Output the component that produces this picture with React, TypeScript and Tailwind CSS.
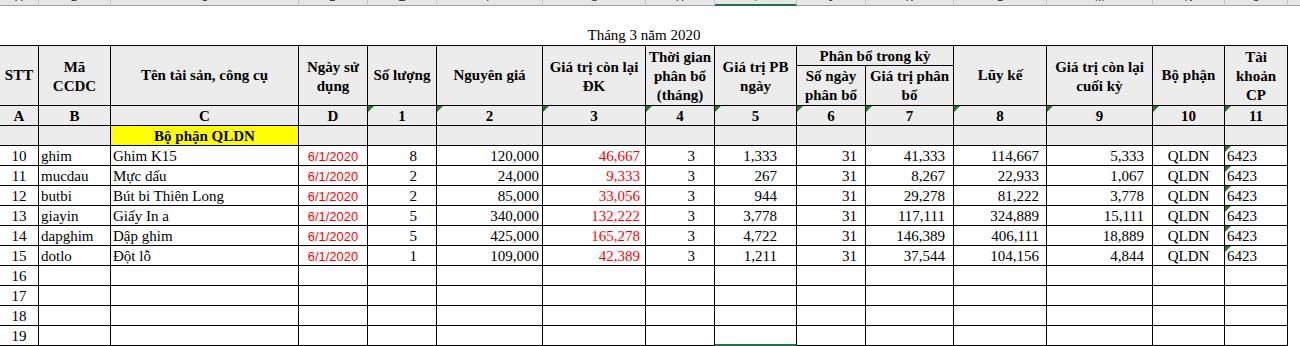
import React from "react";

const widths = ["w-[39px]","w-[72px]","w-[188px]","w-[69px]","w-[69px]","w-[106px]","w-[103px]","w-[69px]","w-[82px]","w-[69px]","w-[88px]","w-[93px]","w-[106px]","w-[72px]","w-[63px]"];
const letters = ["A","B","C","D","E","F","G","H","I","J","K","L","M","N","O"];

const Tri = () => (
  <span className="absolute left-0 top-0 w-0 h-0 border-t-[6px] border-r-[6px] border-t-[#1e7b1e] border-r-transparent" />
);

const base = "relative border-r border-b border-black";
const hdr = `${base} bg-[#ececec] font-bold flex items-center justify-center text-center leading-[19px]`;

type Row = [string, string, string, string, string, string, string, string, string, string, string, string, string];
const rows: Row[] = [
  ["ghim","Ghim K15","8","120,000","46,667","3","1,333","31","41,333","114,667","5,333","QLDN","6423"],
  ["mucdau","Mực dấu","2","24,000","9,333","3","267","31","8,267","22,933","1,067","QLDN","6423"],
  ["butbi","Bút bi Thiên Long","2","85,000","33,056","3","944","31","29,278","81,222","3,778","QLDN","6423"],
  ["giayin","Giấy In a","5","340,000","132,222","3","3,778","31","117,111","324,889","15,111","QLDN","6423"],
  ["dapghim","Dập ghim","5","425,000","165,278","3","4,722","31","146,389","406,111","18,889","QLDN","6423"],
  ["dotlo","Đột lỗ","1","109,000","42,389","3","1,211","31","37,544","104,156","4,844","QLDN","6423"],
];

const dcell = `${base} bg-white flex items-end leading-[17px] whitespace-nowrap overflow-hidden`;

export default function App() {
  return (
    <div className="w-[1300px] h-[346px] bg-white overflow-hidden text-black font-['Liberation_Serif','Times_New_Roman',serif] text-[15px]">
      {/* Excel column header strip */}
      <div className="flex h-[6px]">
        {widths.map((w, i) => (
          <div
            key={i}
            className={`${w} h-[6px] shrink-0 overflow-hidden flex justify-center bg-[#e6e6e6] border-r border-r-[#c4c4c4] ${i === 8 ? "border-b-2 border-b-[#217346]" : "border-b border-b-[#a0a0a0]"}`}
          >
            <span className={`-mt-[8px] text-[11px] leading-[11px] font-['Liberation_Sans',Arial,sans-serif] ${i === 8 ? "text-[#217346]" : "text-[#262626]"}`}>{letters[i]}</span>
          </div>
        ))}
        <div className="flex-1 h-[6px] bg-[#e6e6e6] border-b border-b-[#a0a0a0]" />
      </div>

      {/* Title */}
      <div className="w-[1288px] h-[39px] flex items-end justify-center pb-[1px] leading-[17px]">
        Tháng 3 năm 2020
      </div>

      {/* Table */}
      <div className="w-[1288px] border-t border-black grid grid-cols-[39px_72px_188px_69px_69px_106px_103px_69px_82px_69px_88px_93px_106px_72px_63px] grid-rows-[20px_40px_repeat(12,20px)]">
        <div className={`${hdr} row-span-2`}>STT</div>
        <div className={`${hdr} row-span-2 pt-[2px]`}>Mã<br />CCDC</div>
        <div className={`${hdr} row-span-2`}>Tên tài sản, công cụ</div>
        <div className={`${hdr} row-span-2 pt-[2px]`}>Ngày sử<br />dụng</div>
        <div className={`${hdr} row-span-2`}>Số lượng</div>
        <div className={`${hdr} row-span-2`}>Nguyên giá</div>
        <div className={`${hdr} row-span-2 pt-[2px]`}>Giá trị còn lại<br />ĐK</div>
        <div className={`${hdr} row-span-2 pt-[2px]`}>Thời gian<br />phân bổ<br />(tháng)</div>
        <div className={`${hdr} row-span-2 pt-[2px]`}>Giá trị PB<br />ngày</div>
        <div className={`${hdr} col-span-2 pt-[1px]`}>Phân bổ trong kỳ</div>
        <div className={`${hdr} row-span-2`}>Lũy kế</div>
        <div className={`${hdr} row-span-2 pt-[2px]`}>Giá trị còn lại<br />cuối kỳ</div>
        <div className={`${hdr} row-span-2`}>Bộ phận</div>
        <div className={`${hdr} row-span-2 pt-[2px]`}>Tài<br />khoản<br />CP</div>
        <div className={hdr}>Số ngày<br />phân bổ</div>
        <div className={hdr}>Giá trị phân<br />bổ</div>

        {/* letter row */}
        {["A","B","C","D","1","2","3","4","5","6","7","8","9","10","11"].map((t, i) => (
          <div key={`l${i}`} className={`${base} bg-[#ececec] font-bold flex items-end justify-center leading-[17px]`}>
            {i >= 4 && <Tri />}
            {t}
          </div>
        ))}

        {/* department row */}
        {widths.map((_, i) =>
          i === 2 ? (
            <div key={`d${i}`} className={`${base} bg-[#ffff00] font-bold flex items-end justify-center leading-[17px]`}>
              Bộ phận QLDN
            </div>
          ) : (
            <div key={`d${i}`} className={`${base} bg-[#ececec]`} />
          )
        )}

        {/* data rows */}
        {rows.map((r, k) => (
          <React.Fragment key={`r${k}`}>
            <div className={`${dcell} justify-center`}>{10 + k}</div>
            <div className={`${dcell} pl-[2px]`}>{r[0]}</div>
            <div className={`${dcell} pl-[2px]`}>{r[1]}</div>
            <div className={`${dcell} justify-center text-[#ff0000] text-[13px] font-['Liberation_Sans',Arial,sans-serif]`}>6/1/2020</div>
            <div className={`${dcell} justify-end pr-[19px]`}>{r[2]}</div>
            <div className={`${dcell} justify-end pr-[3px]`}>{r[3]}</div>
            <div className={`${dcell} justify-end pr-[5px] text-[#ff0000]`}>{r[4]}</div>
            <div className={`${dcell} justify-end pr-[19px]`}>{r[5]}</div>
            <div className={`${dcell} justify-end pr-[19px]`}>{r[6]}</div>
            <div className={`${dcell} justify-end pr-[8px]`}>{r[7]}</div>
            <div className={`${dcell} justify-end pr-[8px]`}>{r[8]}</div>
            <div className={`${dcell} justify-end pr-[7px]`}>{r[9]}</div>
            <div className={`${dcell} justify-end pr-[8px]`}>{r[10]}</div>
            <div className={`${dcell} justify-center`}>{r[11]}</div>
            <div className={`${dcell} pl-[2px]`}>
              <Tri />
              {r[12]}
            </div>
          </React.Fragment>
        ))}

        {/* empty rows */}
        {[16, 17, 18, 19].map((n) => (
          <React.Fragment key={`e${n}`}>
            <div className={`${dcell} justify-center`}>{n}</div>
            {widths.slice(1).map((_, i) => (
              <div
                key={`e${n}-${i}`}
                className={`${dcell} ${n === 19 && i === 7 ? "border-b-2 border-b-[#217346]" : ""}`}
              />
            ))}
          </React.Fragment>
        ))}
      </div>
    </div>
  );
}
